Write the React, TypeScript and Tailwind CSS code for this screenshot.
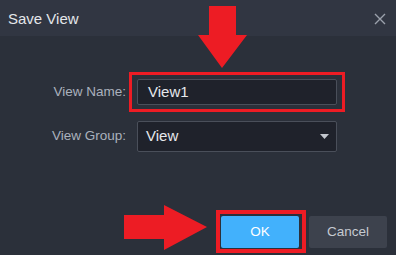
import React from "react";

export default function App() {
  return (
    <div
      className="relative w-[396px] h-[255px] bg-[#2b303a] overflow-hidden"
      style={{ fontFamily: '"Liberation Sans", Arial, sans-serif' }}
    >
      {/* Header */}
      <div className="h-[36px] bg-[#313642] flex items-center justify-between pl-[8px] pr-[10px]">
        <span className="text-[15px] text-[#e4e6ea] leading-none">Save View</span>
        <svg width="12" height="12" viewBox="0 0 12 12" className="mt-[2px]">
          <path d="M1 1 L11 11 M11 1 L1 11" stroke="#9ba1ab" strokeWidth="1.4" />
        </svg>
      </div>

      {/* Body */}
      <div className="flex flex-col pt-[43px]">
        <div className="flex items-center h-[26px]">
          <div className="w-[126px] text-right text-[13.5px] text-[#aab1bd]">View Name:</div>
          <div className="ml-[11px] w-[200px] h-[26px] bg-[#1f222b] border border-[#4a4f5a] rounded-[2px] flex items-center pl-[10px] text-[15px] text-[#e6e8ec]">
            View1
          </div>
        </div>
        <div className="flex items-center h-[31px] mt-[16px]">
          <div className="w-[126px] text-right text-[13.5px] text-[#aab1bd]">View Group:</div>
          <div className="ml-[11px] w-[200px] h-[31px] bg-[#1f222b] border border-[#4a4f5a] rounded-[2px] flex items-center justify-between pl-[8px] pr-[7px] text-[15px] text-[#e6e8ec]">
            <span>View</span>
            <svg width="9" height="5" viewBox="0 0 9 5">
              <path d="M0 0 L9 0 L4.5 5 Z" fill="#c3c7ce" />
            </svg>
          </div>
        </div>
        <div className="flex justify-end gap-[10px] pr-[9px] mt-[64px]">
          <div className="w-[78px] h-[32px] bg-[#42b1fc] rounded-[2px] flex items-center justify-center text-[13.5px] text-white">
            OK
          </div>
          <div className="w-[78px] h-[32px] bg-[#3d424d] rounded-[2px] flex items-center justify-center text-[13.5px] text-[#c6cad1]">
            Cancel
          </div>
        </div>
      </div>

      {/* Annotations */}
      <div className="absolute left-[129px] top-[72px] w-[216px] h-[40px] border-[3px] border-[#ed1c24] pointer-events-none" />
      <div className="absolute left-[216px] top-[210px] w-[90px] h-[43px] border-[4px] border-[#ed1c24] pointer-events-none" />
      <svg className="absolute left-0 top-0 pointer-events-none" width="396" height="255" viewBox="0 0 396 255">
        <polygon points="209,6 236,6 236,35 247,35 222,68 198,35 209,35" fill="#ed1c24" />
        <polygon points="124,215 164,215 164,205 207,227 164,250 164,239 124,239" fill="#ed1c24" />
      </svg>
    </div>
  );
}
